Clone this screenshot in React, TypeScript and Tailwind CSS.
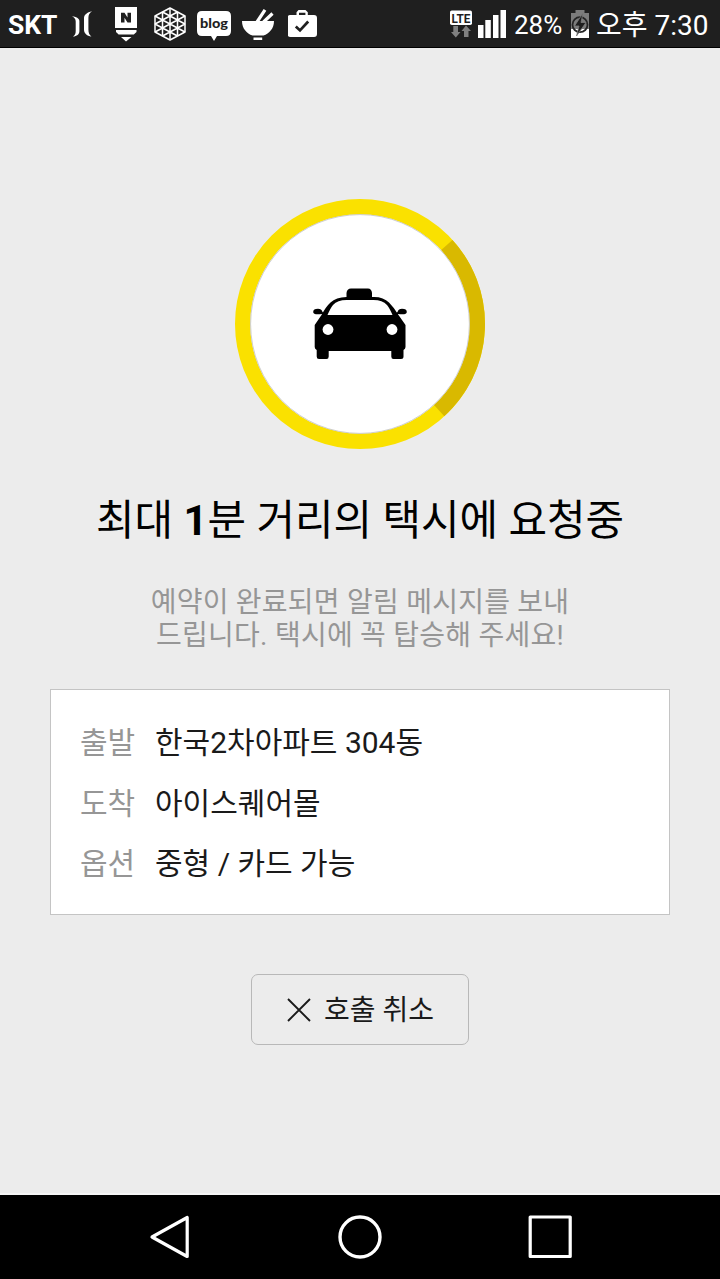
import React from 'react';

const point = (radius: number, degrees: number) => {
  const a = (degrees * Math.PI) / 180;
  return `${(125 + radius * Math.cos(a)).toFixed(2)} ${(125 + radius * Math.sin(a)).toFixed(2)}`;
};

function StatusIcon({ box, className, children }: { box: string; className: string; children: React.ReactNode }) {
  return (
    <svg viewBox={box} className={`block shrink-0 fill-white ${className}`}>
      {children}
    </svg>
  );
}

function StatusBar() {
  return (
    <header className="flex h-12 shrink-0 items-center border-b border-black bg-[#1f1f1f] text-white">
      <span className="w-[72px] pt-[3px] pl-2 text-[26.4px] leading-none font-bold">SKT</span>
      <StatusIcon box="72 0 22 47" className="h-[47px] w-[22px]">
        <path d="M72 16.2C76 16.6 79.4 18.4 79.4 21V31C79.4 34.4 76.8 36.2 73 36.6C75 35.2 75.7 33.5 75.7 31V21.5C75.7 19 74.5 17.4 72 16.2Z" />
        <path d="M92 11.2C87 12.4 84 14.8 84 18V29.5C84 33.5 87 36 91.5 36.6C89.3 35 88.4 32.8 88.4 29.5V18C88.4 14.7 89.6 12.6 92 11.2Z" />
      </StatusIcon>
      <StatusIcon box="94 0 60 47" className="h-[47px] w-[60px]">
        <path d="M115 7H137V28H115ZM116 30H136.5V32L133.8 34.6H118.6L116 32ZM121 37H131.5L126 41.5Z" />
        <path d="M121 22.5V12.8H124.5L127.5 17.5V12.8H131V22.5H127.5L124.5 17.8V22.5Z" fill="#1f1f1f" />
      </StatusIcon>
      <StatusIcon box="154 0 42 47" className="h-[47px] w-[42px]">
        <g fill="none" stroke="#fff" strokeWidth="1.5" strokeLinejoin="round">
          <path d="M170 8L185 16V32L170 40L155 32V16Z" />
          <path d="M170 8V40M155 16L185 32M185 16L155 32M162.5 12V36M177.5 12V36M162.5 12L185 24M177.5 12L155 24M155 24L177.5 36M185 24L162.5 36" />
        </g>
      </StatusIcon>
      <StatusIcon box="196 0 46 47" className="h-[47px] w-[46px]">
        <path d="M202 11H226Q231 11 231 16V31Q231 36 226 36H217L214 41L211 36H202Q197 36 197 31V16Q197 11 202 11Z" />
        <text x="214" y="27.5" textAnchor="middle" textLength="28" lengthAdjust="spacingAndGlyphs" className="fill-[#1f1f1f] font-['Lato','Roboto',sans-serif] text-[13.5px] font-black">blog</text>
      </StatusIcon>
      <StatusIcon box="242 0 46 47" className="h-[47px] w-[46px]">
        <path d="M242 21H274C274 28.5 269.2 33.6 263.5 35.5H252.5C246.8 33.6 242 28.5 242 21ZM253.5 37.5H262.2V40H253.5Z" />
        <path d="M257 22L265 9.8M263.5 22L272.5 13.5" stroke="#fff" strokeWidth="3.2" />
      </StatusIcon>
      <StatusIcon box="288 0 30 47" className="h-[47px] w-[30px]">
        <path fillRule="evenodd" d="M290 15H296.5V12.2L298.5 10H305.5L307.8 12.2V15H314Q317 15 317 18V34Q317 37 314 37H290.5Q287.5 37 287.5 34V18Q287.5 15 290 15ZM299 15H305.4V12.8H299Z" />
        <path d="M295.8 26.4L300 30.4L308.2 21.5" fill="none" stroke="#1f1f1f" strokeWidth="2.7" />
      </StatusIcon>
      <div className="flex-1" />
      <StatusIcon box="449 0 24 47" className="h-[47px] w-[24px]">
        <rect x="450" y="10.5" width="22" height="14.5" rx="1.8" />
        <text x="461" y="22.6" textAnchor="middle" textLength="19" lengthAdjust="spacingAndGlyphs" className="fill-[#1f1f1f] text-[13.5px] font-bold">LTE</text>
        <path d="M453.3 26H458V32H460.5L455.8 37.5L451 32H453.3ZM464 37H468.5V31H471L466 25.5L461.5 31H464Z" fill="#808080" />
      </StatusIcon>
      <StatusIcon box="473 0 41 47" className="h-[47px] w-[41px]">
        <path d="M478 25H483.5V38H478ZM485.3 20H490.8V38H485.3ZM493 15H498.5V38H493ZM500.5 10H506V38H500.5Z" />
      </StatusIcon>
      <span className="w-[57px] pt-[3px] text-[26px] leading-none">28%</span>
      <StatusIcon box="571 0 25 47" className="h-[47px] w-[25px]">
        <path d="M571 13H575.5V10H584.5V13H589V29H571Z" fill="#7c7c7c" />
        <path d="M571 29H589V38H571Z" />
        <circle cx="580" cy="24.7" r="7.5" fill="none" stroke="#252525" strokeWidth="1.8" />
        <path d="M583 13L574.5 26H579L576.5 36L586 22.5H581Z" fill="#1f1f1f" stroke="#7c7c7c" strokeWidth=".8" />
      </StatusIcon>
      <span className="w-[124px] pt-[4px] text-[28px] leading-[40px] whitespace-nowrap">오후 7:30</span>
    </header>
  );
}

function CallProgress() {
  return (
    <svg viewBox="0 0 250 250" className="mt-[151px] block size-[250px] shrink-0">
      <circle cx="125" cy="125" r="109.6" fill="#fff" />
      <circle cx="125" cy="125" r="117.4" fill="none" stroke="#fae100" strokeWidth="15.2" />
      <path d={`M${point(117.4, -42.3)}A117.4 117.4 0 0 1 ${point(117.4, 47.6)}`} fill="none" stroke="#d9b900" strokeWidth="15.2" />
      <circle cx="125" cy="125" r="109.4" fill="none" stroke="#c9c9c9" strokeWidth=".9" />
      <g transform="translate(-235 -199)">
        <path fillRule="evenodd" d="M346.5 297V293Q347 288.5 351 288.5H368Q371.5 288.5 372 293V297Q383 296.3 389 302.5Q394 307.5 398.5 315L405.5 325V347Q405.5 349 403.5 350V356.5Q403.5 359 401 359H393.5Q391.3 359 391.3 356.5V351H328.7V356.5Q328.7 359 326.5 359H319Q316.7 359 316.7 356.5V350Q314.7 349 314.7 347V325L321.5 315Q326 306.5 330.5 302.5Q336 297.3 346.5 297ZM346.5 300Q337.5 300 333 305Q330.5 308 327.5 315H392.5Q389.5 308 387 305Q382.5 300 373.5 300Z" />
        <path d="M323.5 317L322 314Q313.2 315.3 313.2 312Q313.2 308.7 318 308.7Q321.5 308.7 322.5 312L325 314ZM396.5 317L398 314Q406.8 315.3 406.8 312Q406.8 308.7 402 308.7Q398.5 308.7 397.5 312L395 314Z" />
        <circle cx="328" cy="329.5" r="5.4" fill="#fff" />
        <circle cx="392" cy="329.5" r="5.4" fill="#fff" />
      </g>
    </svg>
  );
}

const rows = [
  ['출발', '한국2차아파트 304동'],
  ['도착', '아이스퀘어몰'],
  ['옵션', '중형 / 카드 가능'],
];

export default function App() {
  return (
    <div className="flex h-[1279px] w-[720px] flex-col bg-[#ececec] font-['Roboto','Noto_Sans_CJK_KR',sans-serif]">
      <StatusBar />
      <main className="flex flex-1 flex-col items-center border-b-2 border-[#f5f5f5]">
        <CallProgress />
        <h1 className="mt-[40px] h-[64px] text-[41.9px] leading-[64px] font-normal whitespace-nowrap text-black">
          최대 <b>1</b>분 거리의 택시에 요청중
        </h1>
        <p className="mt-[33px] text-center text-[28px] leading-[33px] font-normal tracking-[0.24px] whitespace-nowrap text-[#969696]">
          예약이 완료되면 알림 메시지를 보내
          <br />
          드립니다. 택시에 꼭 탑승해 주세요!
        </p>
        <dl className="mt-[37px] flex h-[226px] w-[620px] flex-col border border-[#c4c4c4] bg-white px-[29px] pt-[23px] text-[30px] leading-[60.5px]">
          {rows.map(([label, value]) => (
            <div key={label} className="flex">
              <dt className="w-[75px] text-[#969696]">{label}</dt>
              <dd className="whitespace-nowrap text-[#1a1a1a]">{value}</dd>
            </div>
          ))}
        </dl>
        <button className="mt-[59px] flex h-[71px] w-[218px] items-center rounded-[7px] border border-[#b8b8b8] pl-[34px] text-[28px] leading-[60px] whitespace-nowrap text-[#1a1a1a]">
          <svg viewBox="0 0 26 26" className="mr-[12px] size-[26px] shrink-0" fill="none" stroke="#1a1a1a" strokeWidth="1.9">
            <path d="M2 2L24 24M24 2L2 24" />
          </svg>
          <span className="pt-[2px]">호출 취소</span>
        </button>
      </main>
      <nav className="flex h-[84px] shrink-0 items-center justify-center gap-[145px] bg-black">
        <svg viewBox="0 0 46 46" className="size-[46px]" fill="none" stroke="#fff" strokeWidth="3.2" strokeLinejoin="round">
          <path d="M6 23L41.2 3.5V42.5Z" />
        </svg>
        <svg viewBox="0 0 46 46" className="size-[46px]" fill="none" stroke="#fff" strokeWidth="3.4">
          <circle cx="23" cy="23" r="20" />
        </svg>
        <svg viewBox="0 0 46 46" className="size-[46px]" fill="none" stroke="#fff" strokeWidth="3.2" strokeLinejoin="round">
          <path d="M2.2 3H42.2V42.5H2.2Z" />
        </svg>
      </nav>
    </div>
  );
}
